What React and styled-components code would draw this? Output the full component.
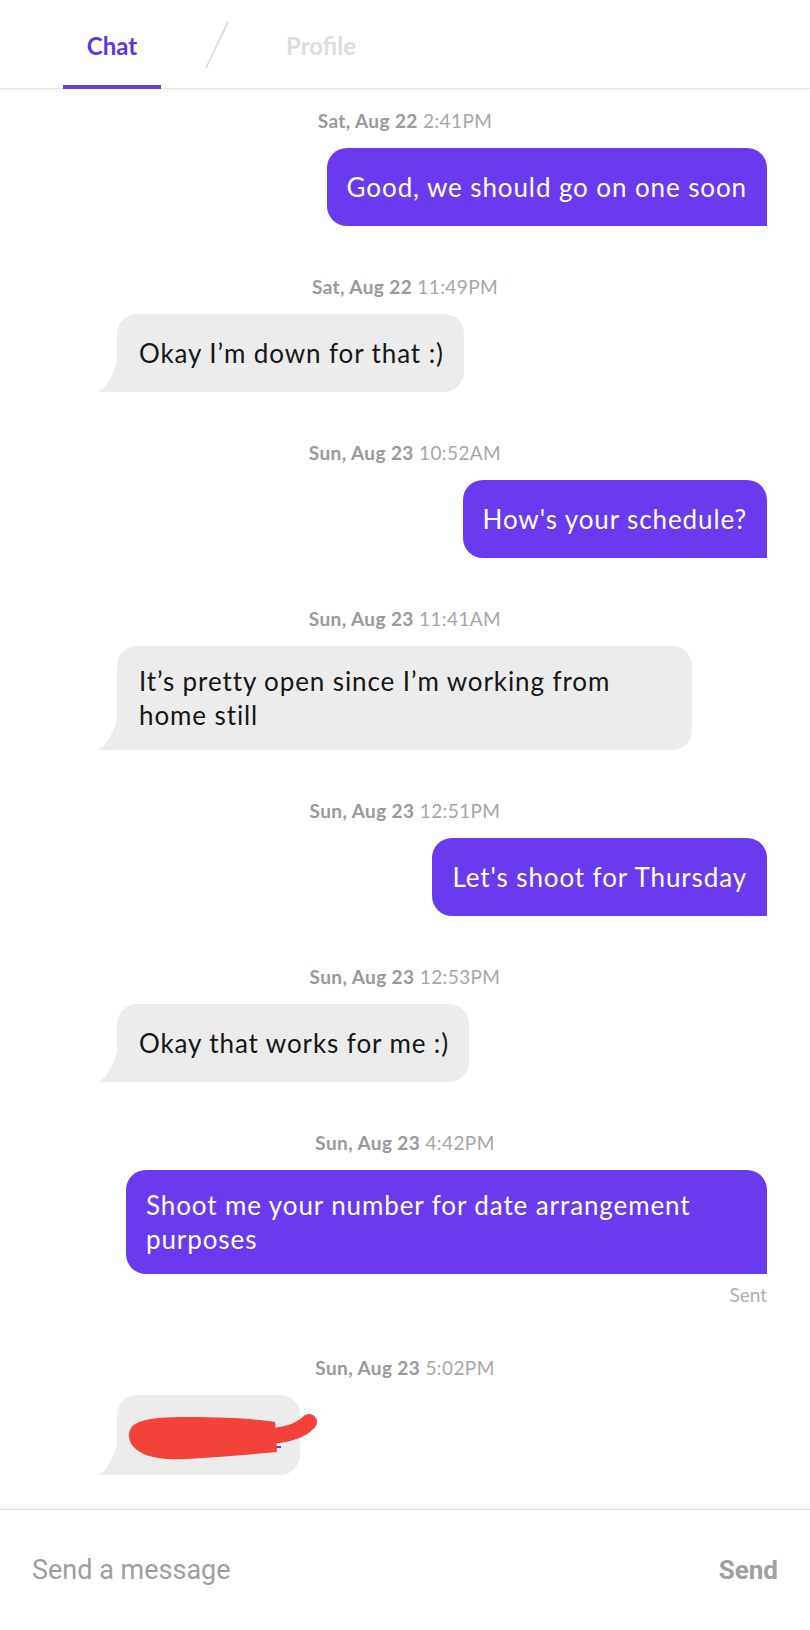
import React from "react";
import styled, { createGlobalStyle } from "styled-components";

const GlobalStyle = createGlobalStyle`
  html, body {
    margin: 0;
    padding: 0;
    background: #ffffff;
  }
  body {
    font-family: Lato, "Open Sans", sans-serif;
  }
  * {
    box-sizing: border-box;
  }
`;

const Screen = styled.div`
  width: 810px;
  height: 100vh;
  display: flex;
  flex-direction: column;
  background: #ffffff;
  overflow: hidden;
`;

const Header = styled.header`
  height: 89px;
  flex-shrink: 0;
  display: flex;
  align-items: stretch;
  padding-left: 63px;
  border-bottom: 1px solid #e6e6e6;
  box-shadow: 0 1px 3px rgba(0, 0, 0, 0.06);
  position: relative;
  z-index: 2;
`;

const Tab = styled.div`
  width: ${(p) => (p.$active ? "98px" : "auto")};
  display: flex;
  align-items: center;
  justify-content: center;
  padding-top: 5px;
  font-size: 24px;
  font-weight: 700;
  color: ${(p) => (p.$active ? "#6236d4" : "#dcdcdc")};
  border-bottom: 4px solid ${(p) => (p.$active ? "#6840d8" : "transparent")};
  margin-bottom: -1px;
`;

const Slash = styled.svg`
  width: 26px;
  height: 50px;
  align-self: flex-start;
  margin-top: 20px;
  margin-left: 43px;
  margin-right: 56px;
`;

const Messages = styled.main`
  flex: 1;
  display: flex;
  flex-direction: column;
  gap: 49px;
  padding: 20px 43px 0 0;
  overflow: hidden;
`;

const Group = styled.section`
  display: flex;
  flex-direction: column;
`;

const Stamp = styled.div`
  text-align: center;
  font-size: 19px;
  line-height: 24px;
  letter-spacing: 0.4px;
  margin-bottom: 15px;
  margin-left: 43px;
  color: #a6a6a6;

  b {
    font-weight: 700;
    color: #999999;
  }
`;

const Row = styled.div`
  display: flex;
  justify-content: ${(p) => (p.$mine ? "flex-end" : "flex-start")};
  padding-left: ${(p) => (p.$mine ? "0" : "117px")};
`;

const Bubble = styled.div`
  position: relative;
  display: flex;
  align-items: center;
  min-height: 78px;
  max-width: ${(p) => (p.$mine ? "641px" : "575px")};
  padding: 18px 20px 18px ${(p) => (p.$mine ? "20px" : "22px")};
  font-size: 26px;
  line-height: 34px;
  letter-spacing: 0.9px;
  color: ${(p) => (p.$mine ? "#ffffff" : "#161616")};
  background: ${(p) => (p.$mine ? "#6a3aef" : "#ececec")};
  border-radius: ${(p) => (p.$mine ? "20px 20px 0 20px" : "20px 20px 20px 0")};

  ${(p) =>
    !p.$mine &&
    `
    &::before {
      content: "";
      position: absolute;
      left: -21px;
      bottom: 0;
      width: 23px;
      height: 30px;
      background: #ececec;
      clip-path: path("M23 0 L23 30 L0 30 Q11 30 21 0 Z");
    }
  `}
`;

const Hidden = styled.span`
  display: block;
  width: 141px;
  height: 44px;
`;

const Scribble = styled.svg`
  position: absolute;
  left: 0;
  top: 0;
  width: 210px;
  height: 80px;
  overflow: visible;
`;

const Status = styled.div`
  align-self: flex-end;
  margin-top: 9px;
  font-size: 19px;
  line-height: 24px;
  color: #b0b0b0;
`;

const Footer = styled.footer`
  height: 121px;
  flex-shrink: 0;
  display: flex;
  align-items: center;
  padding: 0 32px;
  border-top: 1px solid #dedede;
  box-shadow: 0 -3px 6px rgba(0, 0, 0, 0.05);
  background: #ffffff;
  position: relative;
  z-index: 2;
`;

const Input = styled.input`
  flex: 1;
  border: none;
  outline: none;
  background: transparent;
  font-family: Roboto, "Liberation Sans", sans-serif;
  font-size: 27px;
  color: #333;
  padding: 0;

  &::placeholder {
    color: #9e9e9e;
  }
`;

const SendButton = styled.button`
  border: none;
  background: none;
  padding: 0;
  font-family: Roboto, "Liberation Sans", sans-serif;
  font-size: 26px;
  font-weight: 700;
  color: #a0a0a0;
`;

const messages = [
  { date: "Sat, Aug 22", time: "2:41PM", mine: true, text: "Good, we should go on one soon" },
  { date: "Sat, Aug 22", time: "11:49PM", mine: false, text: "Okay I’m down for that :)" },
  { date: "Sun, Aug 23", time: "10:52AM", mine: true, text: "How's your schedule?" },
  { date: "Sun, Aug 23", time: "11:41AM", mine: false, text: "It’s pretty open since I’m working from home still" },
  { date: "Sun, Aug 23", time: "12:51PM", mine: true, text: "Let's shoot for Thursday" },
  { date: "Sun, Aug 23", time: "12:53PM", mine: false, text: "Okay that works for me :)" },
  { date: "Sun, Aug 23", time: "4:42PM", mine: true, text: "Shoot me your number for date arrangement purposes", status: "Sent" },
  { date: "Sun, Aug 23", time: "5:02PM", mine: false, redacted: true },
];

function Redacted() {
  return (
    <>
      <Hidden />
      <Scribble viewBox="0 0 210 80">
        <rect x="158" y="51" width="6" height="2" fill="#6a3aef" />
        <path
          d="M12 40 C12 26 30 22 70 22 C110 22 140 24 158 27 L160 57 C130 60 100 62 70 64 C36 66 12 58 12 40 Z"
          fill="#f2423a"
        />
        <path
          d="M148 42 C165 40 182 38 192 27"
          stroke="#f2423a"
          strokeWidth="16"
          strokeLinecap="round"
          fill="none"
        />
      </Scribble>
    </>
  );
}

export default function App() {
  return (
    <>
      <GlobalStyle />
      <Screen>
        <Header>
          <Tab $active>Chat</Tab>
          <Slash viewBox="0 0 26 50">
            <line x1="24" y1="2" x2="2" y2="48" stroke="#d6d6d6" strokeWidth="1.5" />
          </Slash>
          <Tab>Profile</Tab>
        </Header>

        <Messages>
          {messages.map((m, i) => (
            <Group key={i}>
              <Stamp>
                <b>{m.date}</b> {m.time}
              </Stamp>
              <Row $mine={m.mine}>
                <Bubble $mine={m.mine}>{m.redacted ? <Redacted /> : m.text}</Bubble>
              </Row>
              {m.status && <Status>{m.status}</Status>}
            </Group>
          ))}
        </Messages>

        <Footer>
          <Input placeholder="Send a message" />
          <SendButton>Send</SendButton>
        </Footer>
      </Screen>
    </>
  );
}
